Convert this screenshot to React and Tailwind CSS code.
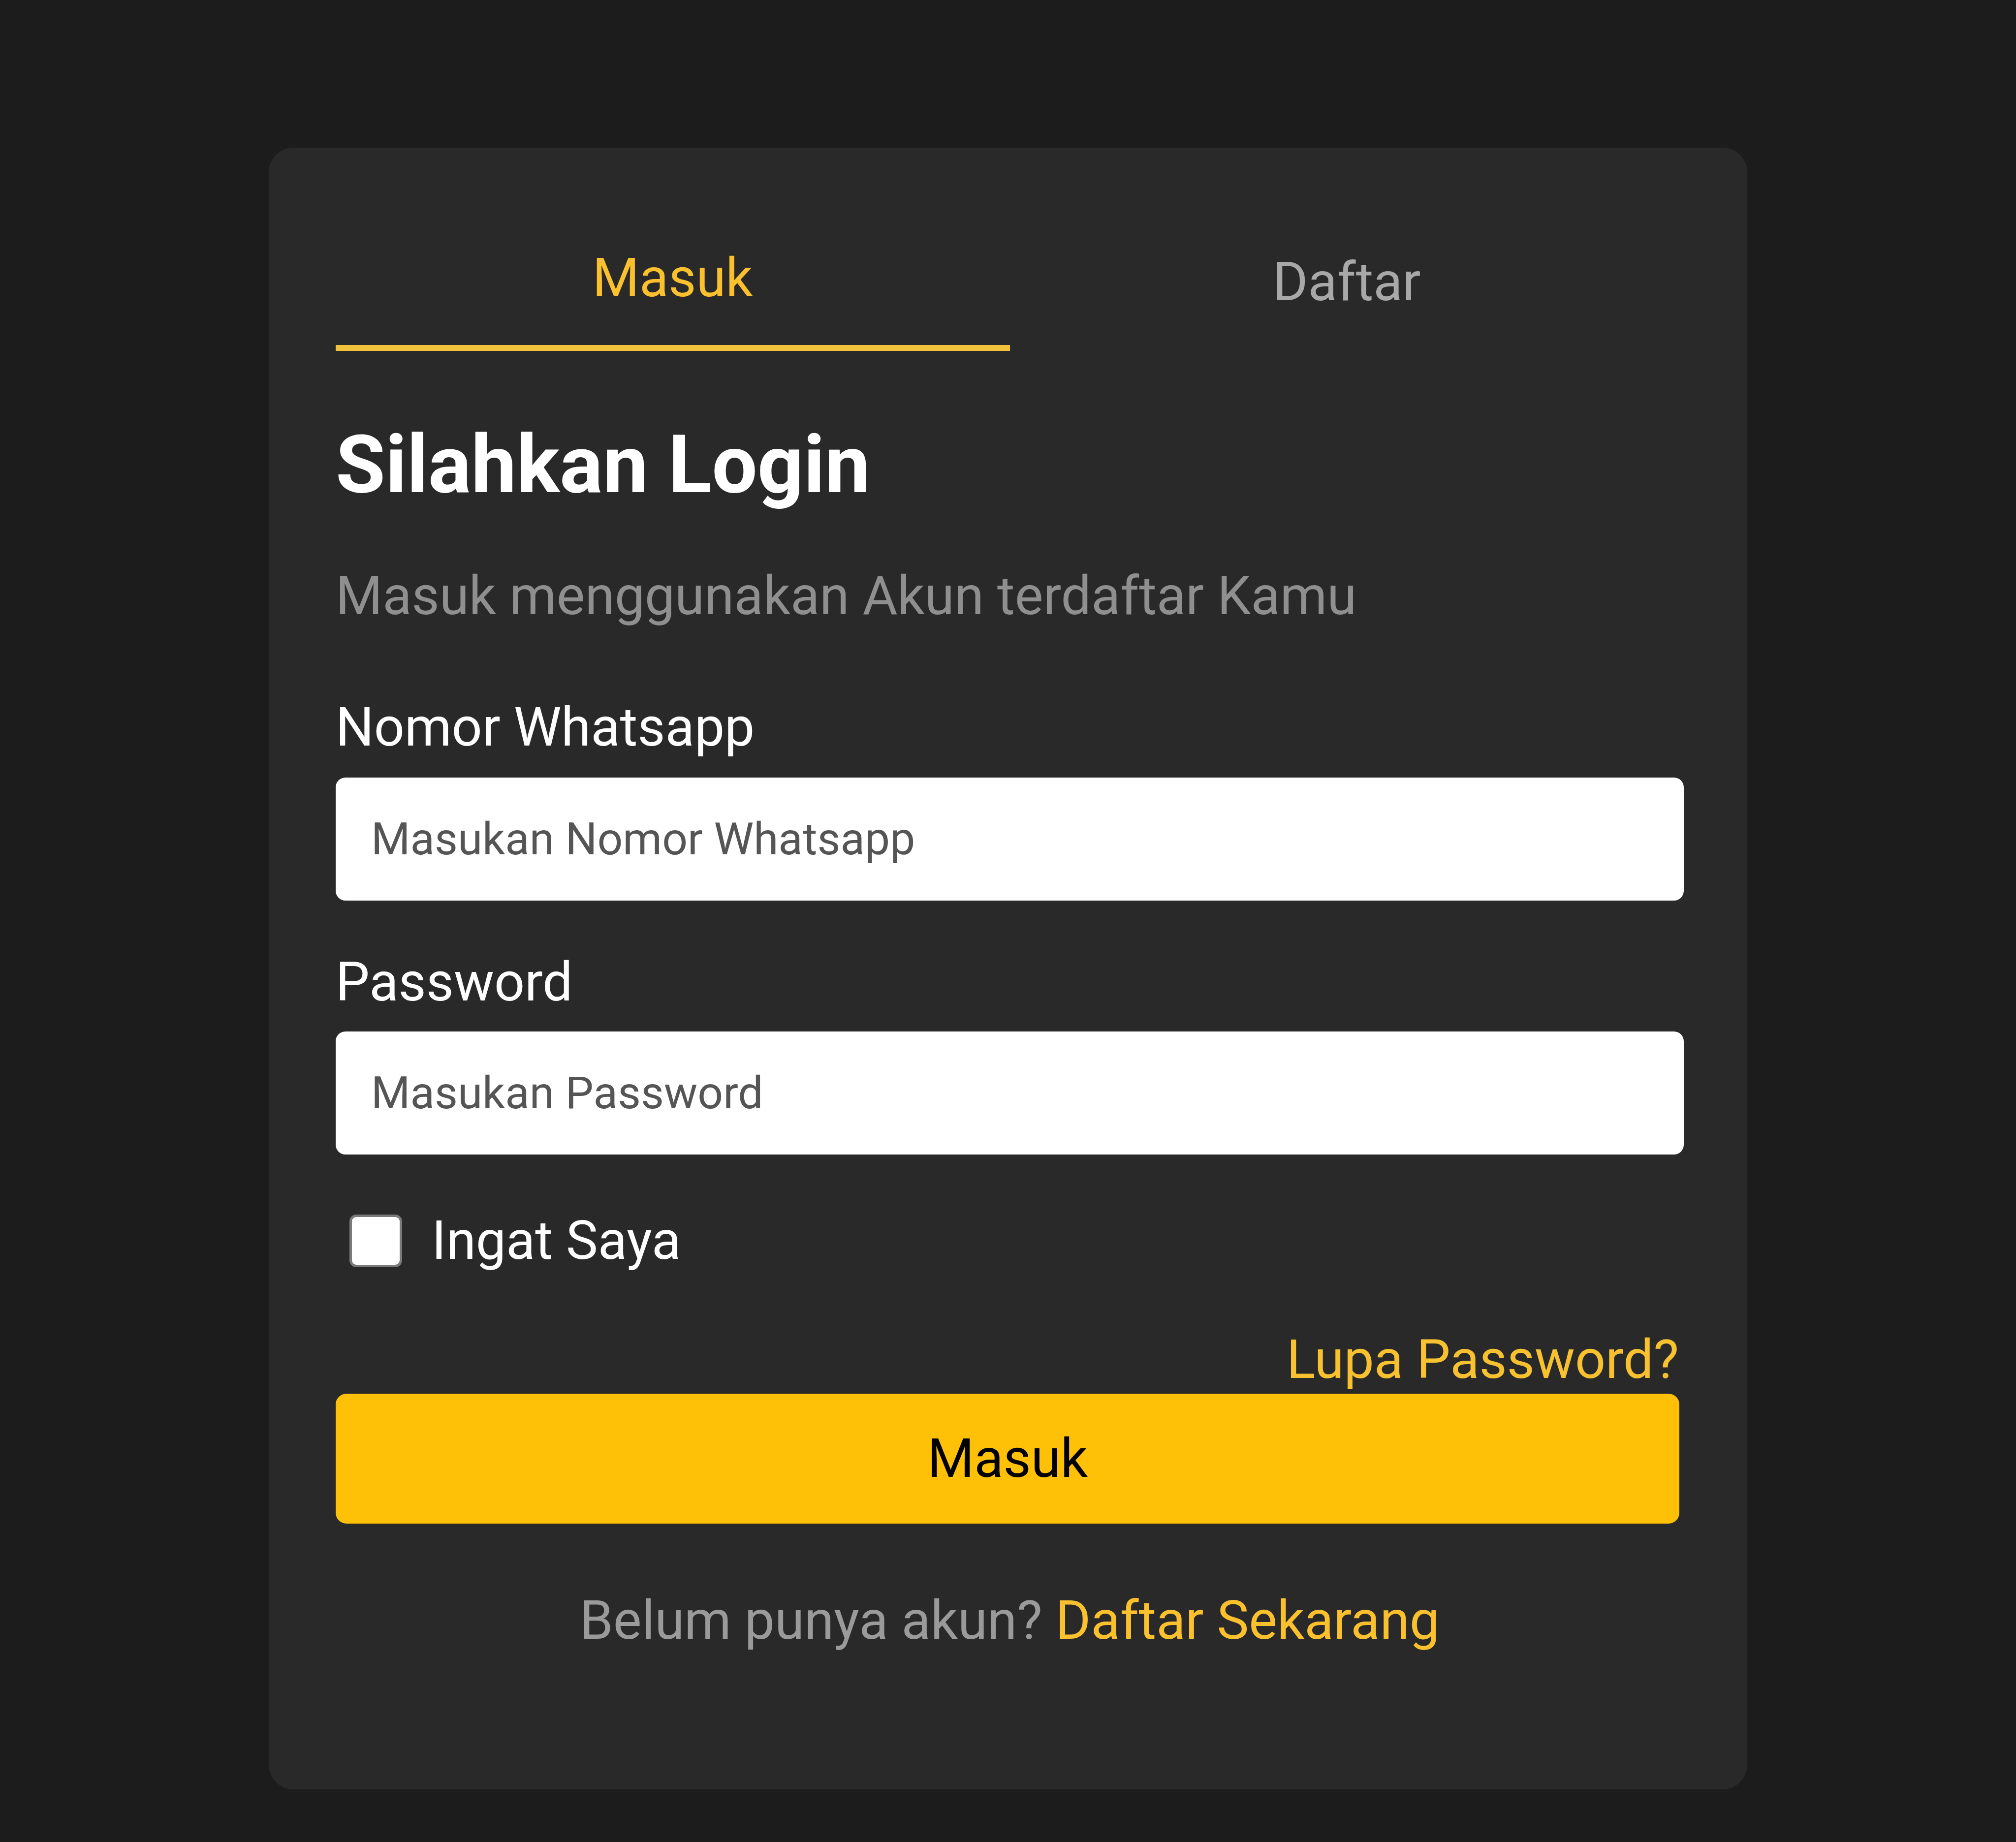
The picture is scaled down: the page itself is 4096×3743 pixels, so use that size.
import React from "react";

export default function App() {
  return (
    <div className="w-[4096px] h-[3743px] bg-[#1c1c1c] pt-[300px] pl-[546px] font-['Roboto','Liberation_Sans',sans-serif]">
      <div className="w-[3004px] rounded-[50px] bg-[#292929] pt-[199px] pl-[136px] pr-[129px] pb-[277px] flex flex-col">
        <div className="grid grid-cols-2 items-start">
          <button className="text-center text-[109px] leading-[132px] text-[#fbc02d] pb-[70px] border-b-[12px] border-[#f2c13b]">
            Masuk
          </button>
          <button className="text-center text-[109px] leading-[132px] text-[#a8a8a8] pt-[8px]">
            Daftar
          </button>
        </div>

        <h1 className="mt-[135px] text-[164px] leading-[192px] font-bold text-white">
          Silahkan Login
        </h1>
        <p className="mt-[105px] text-[109px] leading-[132px] text-[#8f8f8f]">
          Masuk menggunakan Akun terdaftar Kamu
        </p>

        <label className="mt-[135px] text-[109px] leading-[132px] text-white">
          Nomor Whatsapp
        </label>
        <input
          type="text"
          placeholder="Masukan Nomor Whatsapp"
          className="mt-[36px] h-[250px] w-full rounded-[20px] bg-white pl-[72px] text-[91px] text-[#333] placeholder:text-[#555] outline-none"
        />

        <label className="mt-[100px] text-[109px] leading-[132px] text-white">
          Password
        </label>
        <input
          type="password"
          placeholder="Masukan Password"
          className="mt-[34px] h-[250px] w-full rounded-[20px] bg-white pl-[72px] text-[91px] text-[#333] placeholder:text-[#555] outline-none"
        />

        <div className="mt-[109px] flex items-center gap-[60px] pl-[28px]">
          <input
            type="checkbox"
            className="appearance-none w-[107px] h-[107px] rounded-[14px] border-[5px] border-[#7a7a7a] bg-white"
          />
          <span className="text-[109px] leading-[132px] text-white">Ingat Saya</span>
        </div>

        <div className="mt-[110px] text-right pr-[10px] text-[109px] leading-[132px] text-[#f7c12f]">
          Lupa Password?
        </div>

        <button className="mt-[3px] mr-[9px] h-[264px] rounded-[22px] bg-[#ffc107] text-[109px] leading-[132px] text-black">
          Masuk
        </button>

        <p className="mt-[131px] text-center text-[109px] leading-[132px] text-[#9a9a9a]">
          Belum punya akun? <span className="text-[#fbc02d]">Daftar Sekarang</span>
        </p>
      </div>
    </div>
  );
}
